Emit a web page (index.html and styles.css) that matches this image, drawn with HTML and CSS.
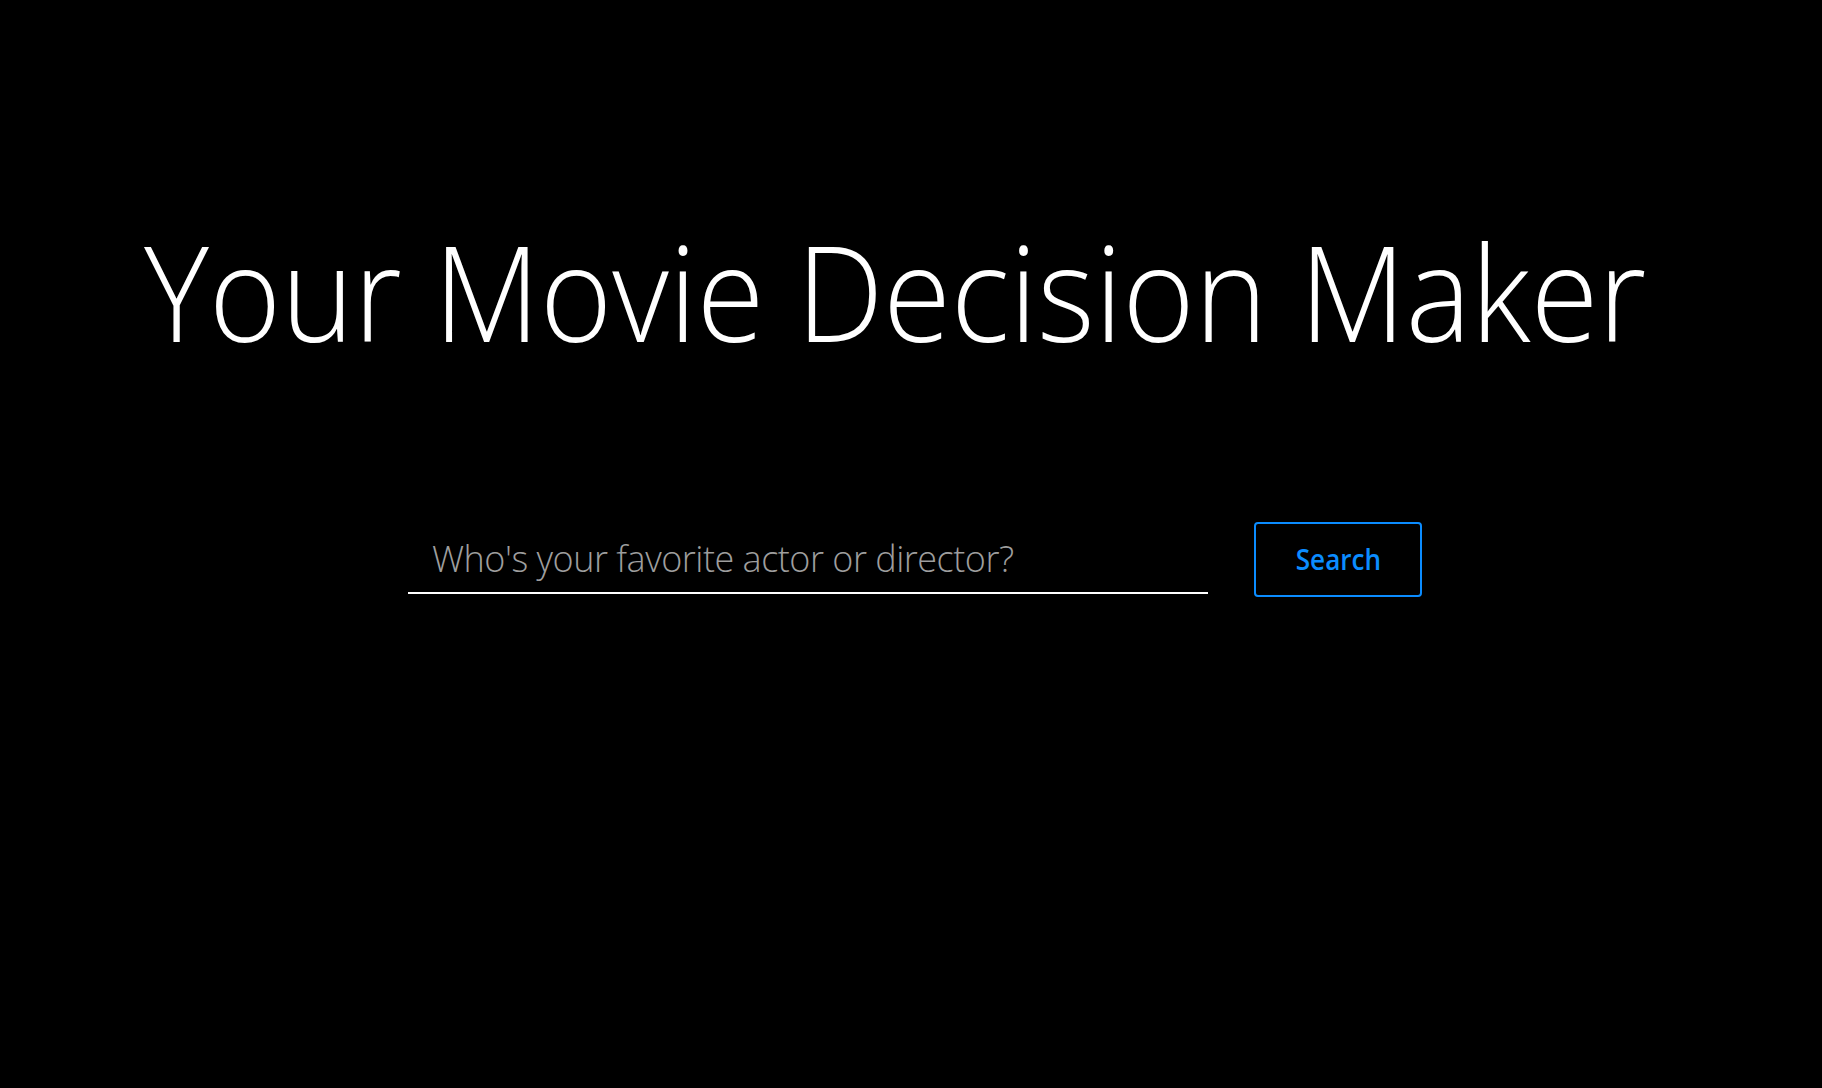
FILE: index.html
```html
<!DOCTYPE html>
<html lang="en">
<head>
<meta charset="utf-8">
<title>Your Movie Decision Maker</title>
<link rel="stylesheet" href="styles.css">
</head>
<body>
<main class="page">
  <h1 class="title">Your Movie Decision Maker</h1>
  <form class="search">
    <input class="search-input" type="text" placeholder="Who's your favorite actor or director?">
    <button class="search-button" type="button"><span class="search-label">Search</span></button>
  </form>
</main>
</body>
</html>
```

FILE: styles.css
```css
html, body {
  margin: 0;
  padding: 0;
  background: #000;
  height: 100%;
}
.page {
  display: flex;
  flex-direction: column;
  align-items: center;
  font-family: "Open Sans", "Noto Sans", sans-serif;
}
.title {
  margin: 212px 32px 0 0;
  font-weight: 300;
  font-size: 132px;
  line-height: 1.2;
  color: #fff;
  white-space: nowrap;
  transform: scaleX(0.933);
}
.search {
  display: flex;
  align-items: flex-start;
  gap: 46px;
  margin: 152px 0 0 8px;
}
.search-input {
  width: 800px;
  margin-top: 4px;
  box-sizing: border-box;
  background: transparent;
  border: none;
  border-bottom: 2px solid #fff;
  color: #fff;
  font-family: "Open Sans", sans-serif;
  font-weight: 300;
  font-size: 36px;
  letter-spacing: -0.5px;
  line-height: 49px;
  padding: 8px 24px 9px;
  outline: none;
}
.search-input::placeholder {
  color: #9e9e9e;
}
.search-button {
  display: flex;
  align-items: center;
  justify-content: center;
  width: 168px;
  height: 75px;
  box-sizing: border-box;
  background: transparent;
  border: 2px solid #0b8cff;
  border-radius: 4px;
  color: #0b8cff;
  font-family: "Open Sans", sans-serif;
  font-weight: 600;
  font-size: 29px;
  padding: 0 0 2px;
}
.search-label {
  display: inline-block;
  transform: scaleX(0.9);
}
```
